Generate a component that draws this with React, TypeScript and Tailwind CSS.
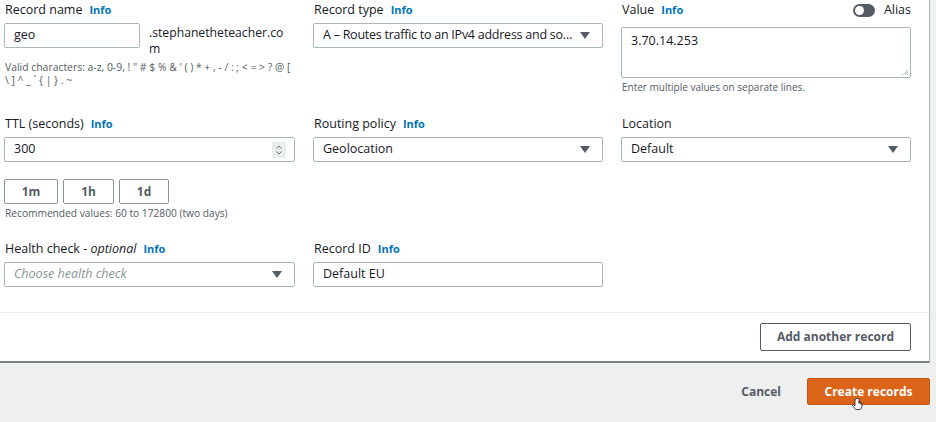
import React from "react";

const Info = () => (
  <span className="ml-[7px] text-[11px] font-bold text-[#0073bb]">Info</span>
);

const Caret = () => (
  <svg width="12" height="9" viewBox="0 0 12 9" className="shrink-0">
    <path d="M1 1 L11 1 L6 8 Z" fill="#545b64" />
  </svg>
);

const Label = ({ children }: { children: React.ReactNode }) => (
  <div className="h-[16px] leading-[16px] text-[12.5px] text-[#16191f] mb-[5px] flex items-center whitespace-nowrap">
    {children}
  </div>
);

const Select = ({ value, placeholder, tight }: { value?: string; placeholder?: string; tight?: boolean }) => (
  <div className="h-[25px] border border-[#aab7b8] rounded-[2px] bg-white flex items-center pl-[9px] pr-[11px]">
    <span
      className={
        "flex-1 truncate text-[12.5px] " +
        (tight ? "tracking-[-0.25px] " : "") +
        (placeholder ? "italic text-[#879596]" : "text-[#16191f]")
      }
    >
      {value ?? placeholder}
    </span>
    <Caret />
  </div>
);

const TextInput = ({ value, className = "" }: { value: string; className?: string }) => (
  <div
    className={
      "h-[25px] border border-[#aab7b8] rounded-[2px] bg-white flex items-center pl-[9px] text-[12.5px] text-[#16191f] " +
      className
    }
  >
    {value}
  </div>
);

const SmallBtn = ({ children, w }: { children: React.ReactNode; w: string }) => (
  <div
    className={
      "h-[25px] border border-[#879596] rounded-[2px] bg-white flex items-center justify-center text-[12px] font-bold text-[#545b64] " +
      w
    }
  >
    {children}
  </div>
);

export default function App() {
  return (
    <div
      className="w-[936px] h-[422px] bg-[#eef0ef] overflow-hidden flex flex-col"
      style={{ fontFamily: '"Open Sans", "Noto Sans", sans-serif' }}
    >
      <div className="w-[930px] h-[363px] bg-white border-r border-[#aab7b8] border-b-2 border-b-[#7d8687] flex flex-col shrink-0">
        <div className="pl-[4px] pt-[2px] pr-[18px]">
          {/* Row 1 */}
          <div className="grid grid-cols-[291px_290px_290px] gap-x-[18px] h-[114px]">
            <div>
              <Label>
                <span className="pl-[1px]">Record name</span>
                <Info />
              </Label>
              <div className="flex items-start">
                <TextInput value="geo" className="w-[136px] shrink-0" />
                <div className="ml-[9px] mt-[2px] text-[12.2px] leading-[16px] text-[#16191f] whitespace-nowrap">
                  <div>.stephanetheteacher.co</div>
                  <div>m</div>
                </div>
              </div>
              <div className="mt-[4px] text-[10.4px] leading-[13px] text-[#545b64] whitespace-nowrap pl-[1px]">
                <div>Valid characters: a-z, 0-9, ! &quot; # $ % &amp; &apos; ( ) * + , - / : ; &lt; = &gt; ? @ [</div>
                <div>\ ] ^ _ ` {"{"} | {"}"} . ~</div>
              </div>
            </div>
            <div>
              <Label>
                <span className="pl-[1px]">Record type</span>
                <Info />
              </Label>
              <Select tight value="A – Routes traffic to an IPv4 address and some AWS resources" />
            </div>
            <div>
              <div className="h-[16px] mb-[9px] flex items-center text-[12.5px] text-[#16191f] whitespace-nowrap">
                <span className="pl-[1px]">Value</span>
                <Info />
                <div className="ml-auto flex items-center">
                  <div className="w-[22px] h-[13px] rounded-full bg-[#545b64] relative">
                    <div className="absolute left-[2px] top-[2px] w-[9px] h-[9px] rounded-full bg-white" />
                  </div>
                  <span className="ml-[9px]">Alias</span>
                </div>
              </div>
              <div className="h-[51px] border border-[#aab7b8] rounded-[2px] bg-white relative pl-[9px] pt-[4px] text-[12.5px] text-[#16191f]">
                <div>3.70.14.253</div>
                <svg width="7" height="7" viewBox="0 0 7 7" className="absolute right-[1px] bottom-[1px]">
                  <path d="M6 1 L1 6 M6 3 L3 6 M6 5 L5 6" stroke="#9aa3a4" strokeWidth="0.8" />
                </svg>
              </div>
              <div className="mt-[3px] text-[10px] leading-[13px] text-[#545b64] pl-[1px]">
                Enter multiple values on separate lines.
              </div>
            </div>
          </div>

          {/* Row 2 */}
          <div className="grid grid-cols-[291px_290px_290px] gap-x-[18px] h-[125px]">
            <div>
              <Label>
                <span className="pl-[1px]">TTL (seconds)</span>
                <Info />
              </Label>
              <div className="h-[25px] border border-[#aab7b8] rounded-[2px] bg-white flex items-center pl-[9px] pr-[8px] text-[12.5px] text-[#16191f]">
                <span className="flex-1">300</span>
                <div className="w-[14px] h-[16px] bg-[#eaeded] flex items-center justify-center">
                  <svg width="8" height="12" viewBox="0 0 8 12">
                    <path d="M1.5 4.5 L4 2 L6.5 4.5 M1.5 7.5 L4 10 L6.5 7.5" fill="none" stroke="#687078" strokeWidth="1" />
                  </svg>
                </div>
              </div>
              <div className="mt-[17px] flex gap-[5px]">
                <SmallBtn w="w-[54px]">1m</SmallBtn>
                <SmallBtn w="w-[51px]">1h</SmallBtn>
                <SmallBtn w="w-[50px]">1d</SmallBtn>
              </div>
              <div className="mt-[3px] text-[10.2px] leading-[13px] text-[#545b64] pl-[1px]">
                Recommended values: 60 to 172800 (two days)
              </div>
            </div>
            <div>
              <Label>
                <span className="pl-[1px]">Routing policy</span>
                <Info />
              </Label>
              <Select value="Geolocation" />
            </div>
            <div>
              <Label>
                <span className="pl-[1px]">Location</span>
              </Label>
              <Select value="Default" />
            </div>
          </div>

          {/* Row 3 */}
          <div className="grid grid-cols-[291px_290px_290px] gap-x-[18px] h-[71px]">
            <div>
              <Label>
                <span className="pl-[1px]">
                  Health check - <span className="italic">optional</span>
                </span>
                <Info />
              </Label>
              <Select placeholder="Choose health check" />
            </div>
            <div>
              <Label>
                <span className="pl-[1px]">Record ID</span>
                <Info />
              </Label>
              <TextInput value="Default EU" />
            </div>
            <div />
          </div>
        </div>

        <div className="border-t border-[#eaeded] flex justify-end pr-[18px] pt-[10px]">
          <div className="w-[151px] h-[28px] border border-[#545b64] rounded-[2px] flex items-center justify-center text-[12px] font-bold text-[#545b64]">
            Add another record
          </div>
        </div>
      </div>

      <div className="w-[930px] flex justify-end items-center pt-[15px]">
        <span className="text-[12px] font-bold text-[#545b64] mr-[26px]">Cancel</span>
        <div className="w-[123px] h-[27px] bg-[#dc6419] border border-[#c45812] rounded-[2px] flex items-center justify-center text-[12px] font-bold text-white relative">
          Create records
          <svg width="12" height="14" viewBox="0 0 12 14" className="absolute left-[44px] top-[19px]">
            <path d="M3 1 v7 l-1.5 -1.5 l-1 1 l3 4 h5 l1.5 -3 v-3 h-1 v1 v-2 h-1 v1 v-2 h-1 v1.5 v-5 z" fill="white" stroke="#222" strokeWidth="0.8" />
          </svg>
        </div>
      </div>
    </div>
  );
}
